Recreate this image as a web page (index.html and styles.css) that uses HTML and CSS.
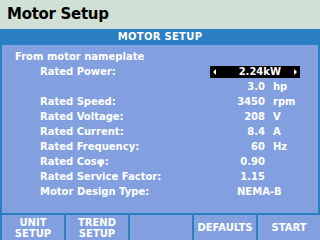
FILE: index.html
```html
<!DOCTYPE html>
<html lang="en">
<head>
    <meta charset="UTF-8">
    <title>Motor Setup</title>
    <link rel="stylesheet" href="styles.css">
</head>
<body>
    <div class="screen">
        <div class="header">Motor Setup</div>

        <div class="panel">
            <div class="panel-title">MOTOR SETUP</div>
            <div class="list">
                <div class="section">From motor nameplate</div>

                <div class="row">
                    <span class="label">Rated Power:</span>
                    <span class="edit">
                        <span class="arrow left"></span>
                        <span class="edit-value">2.24kW</span>
                        <span class="arrow right"></span>
                    </span>
                </div>
                <div class="row">
                    <span class="label"></span>
                    <span class="value">3.0</span>
                    <span class="unit">hp</span>
                </div>
                <div class="row">
                    <span class="label">Rated Speed:</span>
                    <span class="value">3450</span>
                    <span class="unit">rpm</span>
                </div>
                <div class="row">
                    <span class="label">Rated Voltage:</span>
                    <span class="value">208</span>
                    <span class="unit">V</span>
                </div>
                <div class="row">
                    <span class="label">Rated Current:</span>
                    <span class="value">8.4</span>
                    <span class="unit">A</span>
                </div>
                <div class="row">
                    <span class="label">Rated Frequency:</span>
                    <span class="value">60</span>
                    <span class="unit">Hz</span>
                </div>
                <div class="row">
                    <span class="label">Rated Cosφ:</span>
                    <span class="value">0.90</span>
                    <span class="unit"></span>
                </div>
                <div class="row">
                    <span class="label">Rated Service Factor:</span>
                    <span class="value">1.15</span>
                    <span class="unit"></span>
                </div>
                <div class="row">
                    <span class="label">Motor Design Type:</span>
                    <span class="value wide">NEMA-B</span>
                </div>
            </div>
        </div>

        <div class="softkeys">
            <div class="key">UNIT<br>SETUP</div>
            <div class="key">TREND<br>SETUP</div>
            <div class="key"></div>
            <div class="key">DEFAULTS</div>
            <div class="key">START</div>
        </div>
    </div>
</body>
</html>
```

FILE: styles.css
```css
* {
    margin: 0;
    padding: 0;
    box-sizing: border-box;
}

body {
    width: 320px;
    height: 240px;
    overflow: hidden;
    font-family: 'DejaVu Sans', sans-serif;
    font-weight: bold;
    color: #fff;
    background: #2a7fc2;
}

.screen {
    display: flex;
    flex-direction: column;
    height: 240px;
}

.header {
    height: 29px;
    background: #d0e0d4;
    color: #000;
    font-size: 15px;
    line-height: 29px;
    padding-left: 7px;
    letter-spacing: -0.3px;
}

.panel {
    height: 184px;
    background: #82a0e0;
    border-left: 2px solid #2a7fc2;
    border-right: 2px solid #2a7fc2;
}

.panel-title {
    height: 16px;
    line-height: 16px;
    background: #2a7fc2;
    margin: 0 -2px;
    text-align: center;
    font-size: 10px;
    letter-spacing: 0.3px;
}

.list {
    padding-top: 4px;
    font-size: 10px;
    line-height: 15px;
}

.section {
    padding-left: 13px;
}

.row {
    display: grid;
    grid-template-columns: 162px 55px 37px;
    column-gap: 8px;
    padding-left: 38px;
    height: 15px;
}

.value {
    text-align: right;
}

.value.wide {
    grid-column: 2 / 4;
    text-align: left;
    padding-left: 27px;
}

.edit {
    grid-column: 2 / 4;
    width: 90px;
    height: 12px;
    margin-top: 2px;
    background: #000;
    display: flex;
    align-items: center;
    padding: 0 3px;
    line-height: 12px;
}

.edit-value {
    flex: 1;
    text-align: right;
    padding-right: 13px;
}

.arrow {
    width: 0;
    height: 0;
    border-top: 3px solid transparent;
    border-bottom: 3px solid transparent;
}

.arrow.left {
    border-right: 3px solid #fff;
}

.arrow.right {
    border-left: 3px solid #fff;
}

.softkeys {
    flex: 1;
    display: flex;
    gap: 2px;
    padding: 2px 0 0 2px;
}

.key {
    flex: 1;
    background: #82a0e0;
    display: flex;
    align-items: center;
    justify-content: center;
    text-align: center;
    font-size: 10px;
    line-height: 11px;
}
```
